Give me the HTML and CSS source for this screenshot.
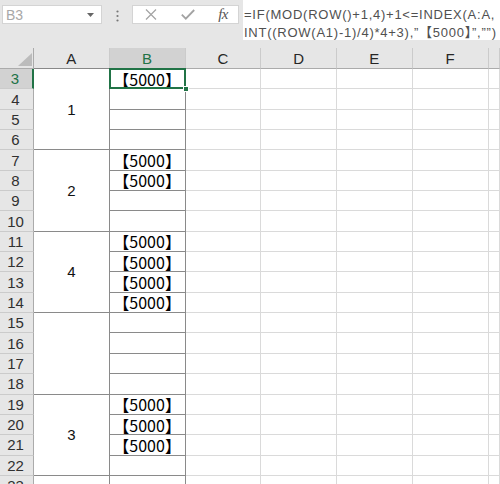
FILE: index.html
```html
<!DOCTYPE html>
<html lang="ja">
<head>
<meta charset="utf-8">
<title>Sheet</title>
<link rel="stylesheet" href="styles.css">
</head>
<body>
<div class="app">
  <div class="toolbar">
    <div class="namebox">
      <span class="nb-text">B3</span>
      <svg class="nb-arrow" width="7" height="4" viewBox="0 0 7 4"><path d="M0 0H7L3.5 4Z" fill="#666"/></svg>
    </div>
    <div class="grip">
      <svg width="3" height="12" viewBox="0 0 3 12"><circle cx="1.5" cy="1.5" r="1.1" fill="#777"/><circle cx="1.5" cy="6" r="1.1" fill="#777"/><circle cx="1.5" cy="10.5" r="1.1" fill="#777"/></svg>
    </div>
    <div class="fxbox">
      <svg class="ico" width="12" height="11" viewBox="0 0 12 11"><path d="M1 0.5L11 10.5M11 0.5L1 10.5" stroke="#a3a3a3" stroke-width="1.2" fill="none"/></svg>
      <svg class="ico" width="14" height="11" viewBox="0 0 14 11"><path d="M0.8 5.6L4.8 9.6L13.2 1" stroke="#a3a3a3" stroke-width="1.8" fill="none"/></svg>
      <span class="fx">fx</span>
    </div>
    <div class="formula">
      <div>=IF(MOD(ROW()+1,4)+1&lt;=INDEX(A:A,</div>
      <div>INT((ROW(A1)-1)/4)*4+3),”【5000】”,””)</div>
    </div>
  </div>
  <div class="sheet">
    <div class="corner"><span class="tri"></span></div>
    <div class="ch">A</div>
    <div class="ch sel">B</div>
    <div class="ch">C</div>
    <div class="ch">D</div>
    <div class="ch">E</div>
    <div class="ch">F</div>
    <div class="ch last"></div>

    <div class="rh rsel">3</div>
    <div class="ca span4">1</div>
    <div class="cb active">【5000】<span class="handle"></span></div>
    <div class="c"></div><div class="c"></div><div class="c"></div><div class="c"></div><div class="c"></div>

    <div class="rh">4</div>
    <div class="cb"></div>
    <div class="c"></div><div class="c"></div><div class="c"></div><div class="c"></div><div class="c"></div>

    <div class="rh">5</div>
    <div class="cb"></div>
    <div class="c"></div><div class="c"></div><div class="c"></div><div class="c"></div><div class="c"></div>

    <div class="rh">6</div>
    <div class="cb"></div>
    <div class="c"></div><div class="c"></div><div class="c"></div><div class="c"></div><div class="c"></div>

    <div class="rh">7</div>
    <div class="ca span4">2</div>
    <div class="cb">【5000】</div>
    <div class="c"></div><div class="c"></div><div class="c"></div><div class="c"></div><div class="c"></div>

    <div class="rh">8</div>
    <div class="cb">【5000】</div>
    <div class="c"></div><div class="c"></div><div class="c"></div><div class="c"></div><div class="c"></div>

    <div class="rh">9</div>
    <div class="cb"></div>
    <div class="c"></div><div class="c"></div><div class="c"></div><div class="c"></div><div class="c"></div>

    <div class="rh">10</div>
    <div class="cb"></div>
    <div class="c"></div><div class="c"></div><div class="c"></div><div class="c"></div><div class="c"></div>

    <div class="rh">11</div>
    <div class="ca span4">4</div>
    <div class="cb">【5000】</div>
    <div class="c"></div><div class="c"></div><div class="c"></div><div class="c"></div><div class="c"></div>

    <div class="rh">12</div>
    <div class="cb">【5000】</div>
    <div class="c"></div><div class="c"></div><div class="c"></div><div class="c"></div><div class="c"></div>

    <div class="rh">13</div>
    <div class="cb">【5000】</div>
    <div class="c"></div><div class="c"></div><div class="c"></div><div class="c"></div><div class="c"></div>

    <div class="rh">14</div>
    <div class="cb">【5000】</div>
    <div class="c"></div><div class="c"></div><div class="c"></div><div class="c"></div><div class="c"></div>

    <div class="rh">15</div>
    <div class="ca span4"></div>
    <div class="cb"></div>
    <div class="c"></div><div class="c"></div><div class="c"></div><div class="c"></div><div class="c"></div>

    <div class="rh">16</div>
    <div class="cb"></div>
    <div class="c"></div><div class="c"></div><div class="c"></div><div class="c"></div><div class="c"></div>

    <div class="rh">17</div>
    <div class="cb"></div>
    <div class="c"></div><div class="c"></div><div class="c"></div><div class="c"></div><div class="c"></div>

    <div class="rh">18</div>
    <div class="cb"></div>
    <div class="c"></div><div class="c"></div><div class="c"></div><div class="c"></div><div class="c"></div>

    <div class="rh">19</div>
    <div class="ca span4">3</div>
    <div class="cb">【5000】</div>
    <div class="c"></div><div class="c"></div><div class="c"></div><div class="c"></div><div class="c"></div>

    <div class="rh">20</div>
    <div class="cb">【5000】</div>
    <div class="c"></div><div class="c"></div><div class="c"></div><div class="c"></div><div class="c"></div>

    <div class="rh">21</div>
    <div class="cb">【5000】</div>
    <div class="c"></div><div class="c"></div><div class="c"></div><div class="c"></div><div class="c"></div>

    <div class="rh">22</div>
    <div class="cb"></div>
    <div class="c"></div><div class="c"></div><div class="c"></div><div class="c"></div><div class="c"></div>

    <div class="rh">23</div>
    <div class="ca"></div>
    <div class="cb"></div>
    <div class="c"></div><div class="c"></div><div class="c"></div><div class="c"></div><div class="c"></div>
  </div>
</div>
</body>
</html>
```

FILE: styles.css
```css
* { box-sizing: border-box; }
html, body { margin: 0; padding: 0; }
body {
  width: 500px;
  height: 484px;
  overflow: hidden;
  background: #ffffff;
  font-family: "Liberation Sans", "Noto Sans CJK JP", sans-serif;
}
.app { width: 500px; height: 484px; overflow: hidden; }

.toolbar {
  height: 48px;
  background: #e6e6e6;
  display: flex;
  align-items: flex-start;
}
.namebox {
  margin: 5px 0 0 2px;
  width: 100px;
  height: 19px;
  background: #fff;
  border: 1px solid #d4d4d4;
  display: flex;
  align-items: center;
  justify-content: space-between;
  padding: 0 7px 0 3px;
}
.nb-text { font-size: 14px; color: #a8a8a8; }
.nb-arrow { display: block; }
.grip {
  width: 30px;
  height: 19px;
  margin-top: 6px;
  display: flex;
  align-items: center;
  justify-content: center;
}
.grip svg { display: block; }
.fxbox {
  margin-top: 5px;
  width: 107px;
  height: 19px;
  background: #fff;
  border: 1px solid #d4d4d4;
  display: flex;
  align-items: center;
  padding: 0 10px 0 12px;
  justify-content: space-between;
}
.ico { display: block; }
.fx {
  font-family: "Liberation Serif", serif;
  font-style: italic;
  font-size: 15px;
  color: #555;
  letter-spacing: -0.5px;
}
.formula {
  margin-left: 4px;
  flex: 1;
  height: 40px;
  background: #fff;
  padding: 6px 0 0 1px;
  font-size: 13px;
  line-height: 18px;
  letter-spacing: 0.75px;
  color: #505050;
  white-space: nowrap;
  overflow: hidden;
}

.sheet {
  height: 436px;
  overflow: hidden;
  display: grid;
  grid-template-columns: 34px repeat(6, 75.75px) 1fr;
  grid-template-rows: 21px;
  grid-auto-rows: 20.35px;
}
.sheet > div {
  border-right: 1px solid #dadada;
  border-bottom: 1px solid #dadada;
  display: flex;
  align-items: center;
  justify-content: center;
  min-width: 0;
}
.sheet > .corner {
  background: #e6e6e6;
  border-right: 1px solid #ababab;
  border-bottom: 1px solid #ababab;
  position: relative;
}
.tri {
  position: absolute;
  right: 1px;
  bottom: 2px;
  width: 0;
  height: 0;
  border-left: 14px solid transparent;
  border-bottom: 13px solid #bcbcbc;
}
.sheet > .ch {
  background: #e6e6e6;
  border-right: 1px solid #cbcbcb;
  border-bottom: 1px solid #ababab;
  font-size: 15px;
  color: #262626;
  padding-top: 1px;
}
.sheet > .ch.sel { background: #d2d2d2; color: #217346; border-bottom-color: #888; }
.sheet > .ch:nth-child(2) { border-bottom-color: #888; }
.sheet > .rh {
  background: #e6e6e6;
  border-right: 1px solid #ababab;
  border-bottom: 1px solid #cbcbcb;
  font-size: 15px;
  color: #303030;
  padding-right: 2px;
}
.sheet > .rh.rsel {
  background: #d2d2d2;
  color: #217346;
  border-right: 2px solid #217346;
}
.sheet > .ca {
  border-right: 1px solid #8a8a8a;
  border-bottom: 1px solid #8a8a8a;
  font-size: 15px;
  color: #111;
}
.sheet > .span4 { grid-row: span 4; }
.sheet > .cb {
  border-right: 1px solid #8a8a8a;
  border-bottom: 1px solid #8a8a8a;
  font-family: "Noto Sans CJK JP", sans-serif;
  font-size: 16px;
  color: #000;
  line-height: 1;
}
.sheet > .cb.active {
  position: relative;
}
.sheet > .cb.active::before {
  content: "";
  position: absolute;
  left: -1px;
  top: -1px;
  right: -1px;
  bottom: -1px;
  border: 2px solid #217346;
}
.handle {
  position: absolute;
  right: -4px;
  bottom: -4px;
  width: 6px;
  height: 6px;
  background: #217346;
  border: 1px solid #fff;
}
```
